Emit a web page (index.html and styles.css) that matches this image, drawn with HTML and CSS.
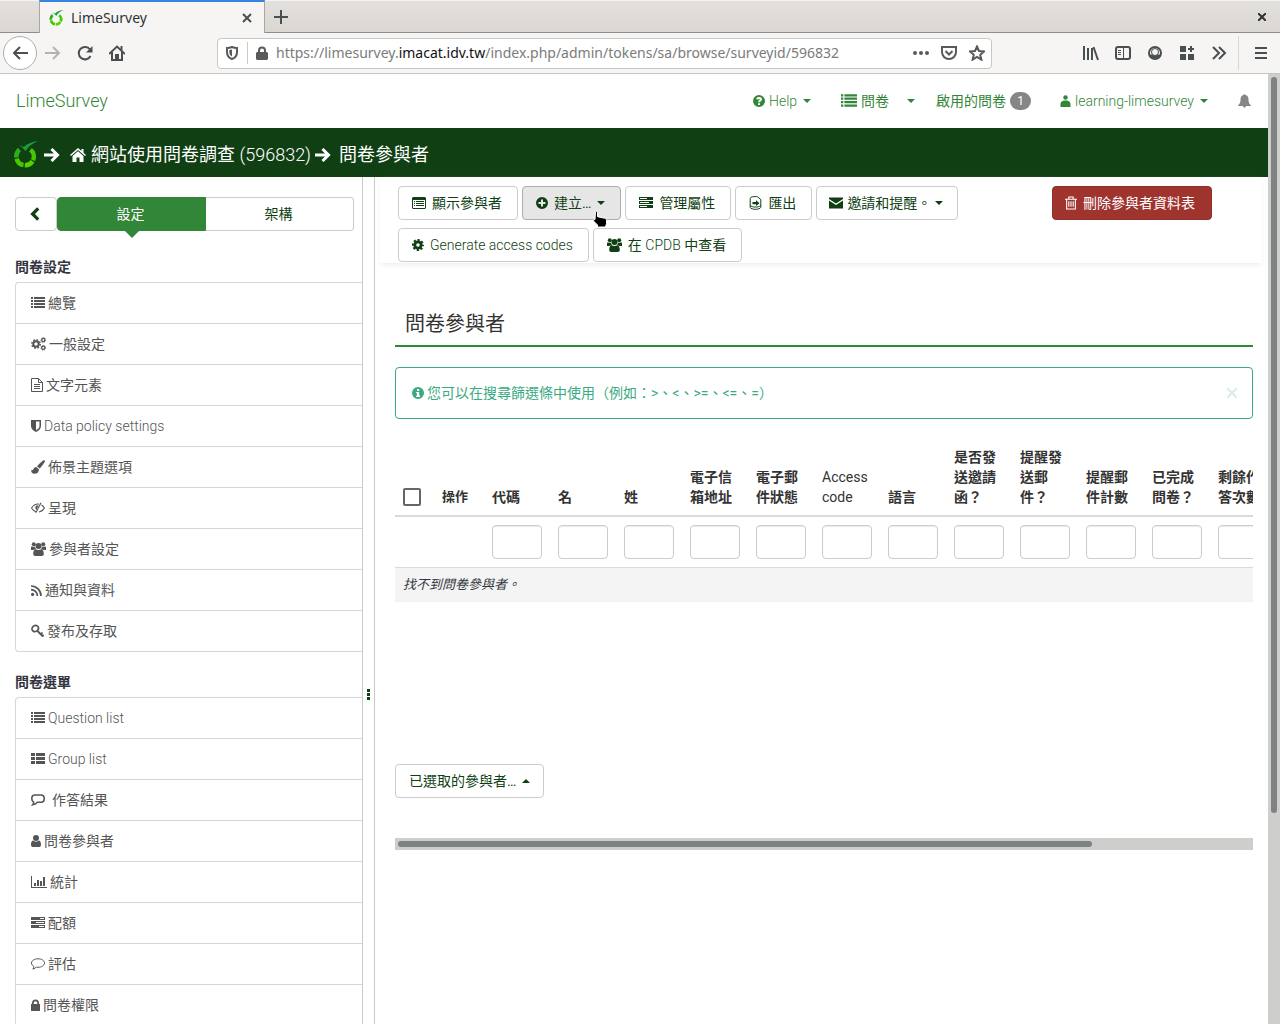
FILE: index.html
```html
<!DOCTYPE html>
<html lang="zh-Hant">
<head>
<meta charset="utf-8">
<meta name="viewport" content="width=device-width, initial-scale=1">
<title>LimeSurvey</title>
<link rel="stylesheet" href="styles.css">
</head>
<body>
<svg class="sprite" aria-hidden="true">
  <symbol id="lime" viewBox="0 0 24 27"><g fill="none" stroke-width="4.500"><path stroke="#2fae1c" d="M5.500 8.600A8.500 8.500 0 0 0 2.500 16.500"/><path stroke="#46c800" d="M2.600 17.600A8.500 8.500 0 0 0 9.500 24"/><path stroke="#55d200" d="M10.800 24.200A8.500 8.500 0 0 0 18.500 20.300"/><path stroke="#46c800" d="M19 19.200A8.500 8.500 0 0 0 16.500 8.800"/></g><path fill="#1d9e3c" d="M3.800 3.800l6 2.200C13.500 2.500 18 .5 24 .2c-6 2.300-9.500 5.300-12.500 9.800C9.500 7.500 7.500 5.500 3.800 3.800z"/></symbol>
  <symbol id="list" viewBox="0 0 14 12"><path d="M0 0h2v2H0zM3 0h11v2H3zM0 3h2v2H0zM3 3h11v2H3zM0 6h2v2H0zM3 6h11v2H3zM0 9h2v2H0zM3 9h11v2H3z"/></symbol>
  <symbol id="thlist" viewBox="0 0 14 12"><path d="M0 0h4v3H0zM5 0h9v3H5zM0 4h4v3H0zM5 4h9v3H5zM0 8h4v3H0zM5 8h9v3H5z"/></symbol>
  <symbol id="gear" viewBox="0 0 12 12"><circle cx="6" cy="6" r="3.200" fill="none" stroke="currentColor" stroke-width="2.800"/><circle cx="6" cy="6" r="5" fill="none" stroke="currentColor" stroke-width="2" stroke-dasharray="2.200 1.727" stroke-dashoffset="1.100"/></symbol>
  <symbol id="gears" viewBox="0 0 15 14"><g fill="none" stroke="currentColor"><circle cx="5" cy="7" r="2.700" stroke-width="2"/><circle cx="5" cy="7" r="4.200" stroke-width="1.500" stroke-dasharray="1.700 1.600"/><circle cx="12.300" cy="3" r="1.600" stroke-width="1.300"/><circle cx="12.300" cy="3" r="2.400" stroke-width=".8" stroke-dasharray="1 .88"/><circle cx="12.300" cy="10.800" r="1.600" stroke-width="1.300"/><circle cx="12.300" cy="10.800" r="2.400" stroke-width=".8" stroke-dasharray="1 .88"/></g></symbol>
  <symbol id="file" viewBox="0 0 12 14"><path fill="none" stroke="currentColor" d="M.5.5h7l4 4v9H.5zM7.500.5v4h4M3 6.500h6M3 8.500h6M3 10.500h6"/></symbol>
  <symbol id="shield" viewBox="0 0 10 12"><path d="M0 0h10v6c0 3-2.500 5-5 6C2.500 11 0 9 0 6zM5 1.500v8.700C7 9.200 8.500 7.800 8.500 6V1.500z" fill-rule="evenodd"/></symbol>
  <symbol id="brush" viewBox="0 0 14 14"><path d="M12.700.2c.9-.3 1.500.5 1.200 1.300-.5 1.300-3.200 5-5.200 7L6 6.300C8 4 11 .9 12.700.2zM5.300 7l2.600 2.200c.1 2.800-1.700 4.600-4.300 4.600C1.200 13.800.2 12 0 9.900c.8.500 1.600.8 2.200-.3C2.900 8.100 3.800 7 5.300 7z"/></symbol>
  <symbol id="eyeslash" viewBox="0 0 14 12"><path fill="none" stroke="currentColor" stroke-width="1.100" d="M5.500 10C3.500 9.500 1.700 8 .6 6 2.300 3.300 4.500 2 7 2h1M10.500 3c1.200.7 2.100 1.700 2.900 3-1.300 2.200-3.200 3.700-5.400 4M10 .8L4.700 11"/><path d="M7.500 3.300L5.500 8C4 7 3.800 4.500 5.500 3.500z"/></symbol>
  <symbol id="users" viewBox="0 0 15 14"><circle cx="2.800" cy="2.300" r="2"/><circle cx="12.200" cy="2.300" r="2"/><circle cx="7.500" cy="4" r="3"/><path d="M0 8V5.500C0 4.500.7 4.200 1.300 4.500c1 .5 2 .4 2.700.2.200 1 .5 1.700 1 2.300-1 .1-1.800.5-2.400 1zM15 8V5.500c0-1-.7-1.300-1.300-1-1 .5-2 .4-2.700.2-.2 1-.5 1.700-1 2.300 1 .1 1.800.5 2.400 1zM2.200 12c0-2.700.7-4.800 2.600-4.800C6 8.200 9 8.200 10.200 7.200c1.900 0 2.600 2.100 2.600 4.800 0 1.300-.8 2-2 2H4.200c-1.200 0-2-.7-2-2z"/></symbol>
  <symbol id="rss" viewBox="0 0 11 11"><circle cx="1.600" cy="9.400" r="1.600"/><path fill="none" stroke="currentColor" stroke-width="1.700" d="M0 4.600A6.400 6.400 0 0 1 6.400 11M0 1a10 10 0 0 1 10 10"/></symbol>
  <symbol id="key" viewBox="0 0 13 13"><path fill="none" stroke="currentColor" stroke-width="1.800" d="M6.500 6.500L12 12M9.800 9.800L11.500 8M11.500 11.700l1.200-1.200"/><ellipse cx="4.200" cy="4" rx="3.300" ry="2.900" fill="none" stroke="currentColor" stroke-width="1.700" transform="rotate(-35 4.200 4)"/></symbol>
  <symbol id="comment-sq" viewBox="0 0 14 12"><path fill="none" stroke="currentColor" stroke-width="1.600" d="M4 1h6c2 0 3.200 1.200 3.200 3.500S12 8.200 10 8.200H6.500C5.500 9.800 4 10.500 1.800 10.700 2.600 9.800 2.700 9 2.500 8 1.300 7.500.8 6.300.8 4.500.8 2.200 2 1 4 1z"/></symbol>
  <symbol id="comment" viewBox="0 0 14 12"><path fill="none" stroke="currentColor" d="M7 .8c3.600 0 6.500 1.800 6.500 4.200S10.600 9.300 7 9.300c-.6 0-1.200 0-1.700-.2-.9 1-2 1.700-3.400 2 .6-.8.900-1.600.9-2.700C1.400 7.600.5 6.400.5 5 .5 2.600 3.400.8 7 .8z"/></symbol>
  <symbol id="user" viewBox="0 0 10 12"><circle cx="5" cy="3" r="3"/><path d="M2 5.500c1.800 1.500 4.200 1.500 6 0 1.500.3 2 2 2 4.200 0 1.500-.8 2.300-2 2.300H2c-1.200 0-2-.8-2-2.300C0 7.500.5 5.800 2 5.500z"/></symbol>
  <symbol id="person" viewBox="0 0 10 13"><circle cx="5" cy="2.500" r="2.200"/><path d="M0 12V9.500C0 6.500 2 5.500 5 5.500s5 1 5 4V12z"/></symbol>
  <symbol id="chart" viewBox="0 0 16 12"><path d="M0 0h1v11h15v1H0zM3 7h2v3H3zM6 4h2v6H6zM9 5h2v5H9zM12 1h2v9h-2z"/></symbol>
  <symbol id="tasks" viewBox="0 0 14 12"><path fill-rule="evenodd" d="M0 0h14v3H0zM9 1v1h4V1zM0 4h14v3H0zM5 5v1h8V5zM0 8h14v3H0zM8 9v1h5V9z"/></symbol>
  <symbol id="lock" viewBox="0 0 9 12"><path fill-rule="evenodd" d="M1 5V4a3.500 3.500 0 0 1 7 0v1h1v7H0V5zM2.700 5h3.600V4a1.800 1.800 0 0 0-3.600 0z"/></symbol>
  <symbol id="table" viewBox="0 0 14 12"><path fill-rule="evenodd" d="M1 0h12l1 1v10l-1 1H1l-1-1V1zM1 3v8h12V3zM2 4h1v1H2zM4 4h8v1H4zM2 6h1v1H2zM4 6h8v1H4zM2 8h1v1H2zM4 8h8v1H4z"/></symbol>
  <symbol id="plus" viewBox="0 0 12 12"><path fill-rule="evenodd" d="M6 0a6 6 0 1 0 0 12A6 6 0 0 0 6 0zM5 2.500h2V5h2.500v2H7v2.500H5V7H2.500V5H5z"/></symbol>
  <symbol id="server" viewBox="0 0 14 12"><path fill-rule="evenodd" d="M0 0h14v3H0zM1 1v1h7V1zM0 4h14v3H0zM1 5v1h9V5zM0 8h14v3H0zM1 9v1h7V9z"/></symbol>
  <symbol id="export" viewBox="0 0 12 14"><path fill="none" stroke="currentColor" d="M8 .8C5 .3.700.5.700 2.700v8.500C.7 14 11.300 14 11.300 11V3.500L8 .8zM.7 9.500c2 2 8 2.200 10.600 0"/><path d="M3 6h3.500V4.200L10 7.200 6.500 10V8.200H3z"/></symbol>
  <symbol id="mail" viewBox="0 0 14 11"><path d="M0 0h14v1.500L7 6 0 1.500zM0 3l7 4.500L14 3v8H0z"/></symbol>
  <symbol id="trash" viewBox="0 0 11 12"><path fill="none" stroke="currentColor" d="M0 2.500h11M3.500 2.500v-2h4v2M1.500 2.500v9h8v-9M3.500 4.500v5M5.500 4.500v5M7.500 4.500v5"/></symbol>
  <symbol id="info" viewBox="0 0 12 12"><path fill-rule="evenodd" d="M6 0a6 6 0 1 0 0 12A6 6 0 0 0 6 0zM5 2h2.200v2H5zM4.200 5h3v3.500H8V10H4.200V8.500H5V6.300h-.8z"/></symbol>
  <symbol id="help" viewBox="0 0 12 12"><path fill-rule="evenodd" d="M6 0a6 6 0 1 0 0 12A6 6 0 0 0 6 0zM5 8.200h2V10H5zM3.200 4C3.400 2.600 4.600 2 6 2c1.600 0 3 .8 3 2.300 0 1.600-1.800 1.700-1.800 3H5c0-2 1.800-1.900 1.800-2.800 0-.8-1.500-.9-1.800.2z"/></symbol>
  <symbol id="bell" viewBox="0 0 13 14"><path d="M6.500 0l1 1.100c2 .5 3 2 3 4.400 0 3 .7 4.500 2.500 6V12H8a1.500 1.500 0 0 1-3 0H0v-.5c1.800-1.500 2.500-3 2.500-6 0-2.400 1-3.900 3-4.400z"/></symbol>
  <symbol id="arrow" viewBox="0 0 16 14"><path fill="none" stroke="currentColor" stroke-width="3" d="M0 7h13M7.500 1l6 6-6 6"/></symbol>
  <symbol id="home" viewBox="0 0 16 14"><path d="M8 0L0 7l1 1 7-6 7 6 1-1-2.500-2.200V1h-2v2zM8 3.200L2.500 8v6h4V9.500h3V14h4V8z"/></symbol>
  <symbol id="chevron" viewBox="0 0 9 13"><path fill="none" stroke="currentColor" stroke-width="3" d="M7.500 1.300L2.300 6.500l5.200 5.200"/></symbol>
</svg>

<header class="browser">
  <div class="tabs">
    <div class="tab">
      <svg class="favicon"><use href="#lime"/></svg>
      <span class="tab-name">LimeSurvey</span>
      <button class="plain" aria-label="Close tab"><svg width="10" height="10" viewBox="0 0 10 10"><path class="line" d="M1 1l8 8M9 1L1 9"/></svg></button>
    </div>
    <button class="plain new-tab" aria-label="New tab"><svg width="14" height="14" viewBox="0 0 14 14"><path class="line" d="M7 0v14M0 7h14"/></svg></button>
    <button class="plain win-close" aria-label="Close window"><svg width="8" height="8" viewBox="0 0 8 8"><path class="line" d="M0 0l8 8M8 0L0 8"/></svg></button>
  </div>
  <div class="bar">
    <button class="plain back" aria-label="Back"><svg width="16" height="14" viewBox="0 0 16 14"><path class="line" d="M16 7H2M8 1L2 7l6 6"/></svg></button>
    <button class="plain off" aria-label="Forward"><svg width="16" height="14" viewBox="0 0 16 14"><path class="line" d="M0 7h14M8 1l6 6-6 6"/></svg></button>
    <button class="plain" aria-label="Reload"><svg width="16" height="16" viewBox="0 0 16 16"><path class="line" d="M13.500 11A6.200 6.200 0 1 1 13 4.500"/><path d="M15.500 1v6.500H9z"/></svg></button>
    <button class="plain" aria-label="Home"><svg width="16" height="16" viewBox="0 0 16 16"><path class="line" d="M0 9l8-7.500L16 9M3 7v8h10V7"/><path d="M6 9h4v6H6zM11.500 1h2v4h-2z"/></svg></button>
    <div class="url">
      <svg width="12" height="14" viewBox="0 0 12 14"><path class="line" d="M1 2c2 0 3.500-.3 5-1 1.500.7 3 1 5 1v4c0 3.500-2 6-5 7-3-1-5-3.500-5-7z"/><path d="M6 3.500v7C4.300 9.500 3.300 8 3.300 6V4z"/></svg>
      <i class="url-rule"></i>
      <svg width="12" height="14" viewBox="0 0 12 14"><path fill-rule="evenodd" d="M2 6V4.500a4 4 0 0 1 8 0V6h1l1 1v6l-1 1H1l-1-1V7l1-1zM4 6h4V4.500a2 2 0 0 0-4 0z"/></svg>
      <span class="address">https://limesurvey.<b>imacat.idv.tw</b>/index.php/admin/tokens/sa/browse/surveyid/596832</span>
      <svg width="16" height="16" viewBox="0 0 16 16"><circle cx="2" cy="8" r="2"/><circle cx="8" cy="8" r="2"/><circle cx="14" cy="8" r="2"/></svg>
      <svg width="16" height="16" viewBox="0 0 16 16"><path class="line" d="M1 2h14v5a7 7 0 0 1-14 0zM4.500 6L8 9.500 11.500 6"/></svg>
      <svg width="16" height="16" viewBox="0 0 16 16"><path class="line" d="M8 1.500l2 4.500 5 .5-3.800 3.300 1.200 4.900L8 12l-4.400 2.700 1.200-4.900L1 6.500 6 6z"/></svg>
    </div>
    <button class="plain" aria-label="Library"><svg width="16" height="16" viewBox="0 0 16 16"><path class="line" d="M1 1v14M5 3v12M9 3v12M10.500 2L15 15"/></svg></button>
    <button class="plain" aria-label="Sidebars"><svg width="16" height="16" viewBox="0 0 16 16"><rect class="line" x="1" y="2" width="14" height="12" rx="2"/><path class="line thin" d="M8.500 2v12M3 5.500h3M3 7.500h3M3 9.500h3"/></svg></button>
    <button class="plain" aria-label="Account"><svg width="16" height="16" viewBox="0 0 16 16"><circle class="line" cx="8" cy="8" r="6"/><path d="M2.500 9.500h3C6.500 11 9.500 11 10.500 9.500h3L12 13H4z"/><circle class="line thin" cx="8" cy="7" r="3.500"/></svg></button>
    <button class="plain" aria-label="Extension"><svg width="16" height="16" viewBox="0 0 16 16"><path d="M1 1h6v6H1zM1 9h6v6H1zM9 9h6v6H9zM11 1h2v2h2v2h-2v2h-2V5H9V3h2z"/></svg></button>
    <button class="plain" aria-label="More tools"><svg width="16" height="16" viewBox="0 0 16 16"><path class="line" d="M2 2l6 6-6 6M8 2l6 6-6 6"/></svg></button>
    <i class="bar-rule"></i>
    <button class="plain" aria-label="Menu"><svg width="12" height="14" viewBox="0 0 12 14"><path class="line" d="M0 2h12M0 7h12M0 12h12"/></svg></button>
  </div>
</header>

<div class="viewport">
  <div class="page">
    <nav class="navbar">
      <a class="brand latin" href="#">LimeSurvey</a>
      <a class="nav-help latin" href="#"><svg class="i12"><use href="#help"/></svg> Help <i class="caret"></i></a>
      <a class="nav-surveys" href="#"><svg class="i16"><use href="#list"/></svg> 問卷</a>
      <a class="nav-more" href="#" aria-label="問卷選單"><i class="caret"></i></a>
      <a class="nav-active" href="#">啟用的問卷 <span class="badge">1</span></a>
      <a class="nav-user latin" href="#"><svg class="i11"><use href="#person"/></svg> learning-limesurvey <i class="caret"></i></a>
      <a class="nav-bell" href="#" aria-label="通知"><svg class="i13"><use href="#bell"/></svg></a>
    </nav>
    <div class="crumbs">
      <svg class="logo"><use href="#lime"/></svg>
      <svg class="i16"><use href="#arrow"/></svg>
      <a href="#"><svg class="i16"><use href="#home"/></svg><span>網站使用問卷調查 <span class="latin">(596832)</span></span></a>
      <svg class="i16"><use href="#arrow"/></svg>
      <span>問卷參與者</span>
    </div>
    <div class="columns">
      <aside class="sidebar">
        <div class="switch">
          <button class="btn collapse" aria-label="收合"><svg class="i12"><use href="#chevron"/></svg></button>
          <button class="btn on">設定</button>
          <button class="btn struct">架構</button>
        </div>
        <h2>問卷設定</h2>
        <ul class="menu">
          <li><a href="#"><svg class="i14"><use href="#list"/></svg>總覽</a></li>
          <li><a href="#"><svg class="i15"><use href="#gears"/></svg>一般設定</a></li>
          <li><a href="#"><svg class="i12"><use href="#file"/></svg>文字元素</a></li>
          <li><a href="#" class="latin"><svg class="i10"><use href="#shield"/></svg>Data policy settings</a></li>
          <li><a href="#"><svg class="i14"><use href="#brush"/></svg>佈景主題選項</a></li>
          <li><a href="#"><svg class="i14"><use href="#eyeslash"/></svg>呈現</a></li>
          <li><a href="#"><svg class="i15"><use href="#users"/></svg>參與者設定</a></li>
          <li><a href="#"><svg class="i11"><use href="#rss"/></svg>通知與資料</a></li>
          <li><a href="#"><svg class="i13"><use href="#key"/></svg>發布及存取</a></li>
        </ul>
        <h2>問卷選單</h2>
        <ul class="menu">
          <li><a href="#" class="latin"><svg class="i14"><use href="#list"/></svg>Question list</a></li>
          <li><a href="#" class="latin"><svg class="i14"><use href="#thlist"/></svg>Group list</a></li>
          <li><a href="#" class="wide"><svg class="i14"><use href="#comment-sq"/></svg>作答結果</a></li>
          <li><a href="#"><svg class="i10"><use href="#user"/></svg>問卷參與者</a></li>
          <li><a href="#"><svg class="i16"><use href="#chart"/></svg>統計</a></li>
          <li><a href="#"><svg class="i14"><use href="#tasks"/></svg>配額</a></li>
          <li><a href="#"><svg class="i14"><use href="#comment"/></svg>評估</a></li>
          <li><a href="#"><svg class="i9"><use href="#lock"/></svg>問卷權限</a></li>
        </ul>
      </aside>
      <div class="splitter"><i></i><i></i><i></i></div>
      <main>
        <div class="toolbar">
          <div class="tools">
            <button class="btn"><svg class="i14"><use href="#table"/></svg>顯示參與者</button>
            <button class="btn hover"><svg class="i12"><use href="#plus"/></svg>建立… <i class="caret"></i>
              <svg class="pointer" viewBox="0 0 14 18"><path fill="#000" stroke="#fff" d="M2.500 1.500c1.300-.8 2 .2 2 1.200v4l7 1.500c1.500.4 2 1 2 2.300v3l-1 3.500h-8v-2L1 11.500c-.8-1.200-.2-2.300 1-2z"/></svg>
            </button>
            <button class="btn"><svg class="i14"><use href="#server"/></svg>管理屬性</button>
            <button class="btn"><svg class="i13"><use href="#export"/></svg>匯出</button>
            <button class="btn invite"><svg class="i14"><use href="#mail"/></svg>邀請和提醒。<i class="caret"></i></button>
            <button class="btn latin"><svg class="i12"><use href="#gear"/></svg>Generate access codes</button>
            <button class="btn"><svg class="i15"><use href="#users"/></svg><span>在 <span class="latin">CPDB</span> 中查看</span></button>
          </div>
          <div class="danger-zone"><button class="btn danger"><svg class="i12"><use href="#trash"/></svg>刪除參與者資料表</button></div>
        </div>
        <section class="content">
          <h1>問卷參與者</h1>
          <div class="alert"><svg class="i12"><use href="#info"/></svg><span>您可以在搜尋篩選條中使用（例如：&gt;、&lt;、&gt;=、&lt;=、=）</span><button class="plain dismiss" aria-label="關閉"><svg width="10" height="10" viewBox="0 0 10 10"><path class="line" d="M0 0l10 10M10 0L0 10"/></svg></button></div>
          <div class="scroller">
            <table>
              <colgroup><col class="c-check"><col class="c-act"><col span="12" class="c-field"></colgroup>
              <thead>
                <tr><th><input type="checkbox" aria-label="全選"></th><th class="small">操作</th><th>代碼</th><th>名</th><th>姓</th><th>電子信箱地址</th><th>電子郵件狀態</th><th class="thin-head">Access code</th><th>語言</th><th>是否發送邀請函？</th><th>提醒發送郵件？</th><th>提醒郵件計數</th><th>已完成問卷？</th><th>剩餘作答次數</th></tr>
                <tr class="filters"><td></td><td></td><td><input type="text" aria-label="代碼"></td><td><input type="text" aria-label="名"></td><td><input type="text" aria-label="姓"></td><td><input type="text" aria-label="電子信箱地址"></td><td><input type="text" aria-label="電子郵件狀態"></td><td><input type="text" aria-label="Access code"></td><td><input type="text" aria-label="語言"></td><td><input type="text" aria-label="是否發送邀請函"></td><td><input type="text" aria-label="提醒發送郵件"></td><td><input type="text" aria-label="提醒郵件計數"></td><td><input type="text" aria-label="已完成問卷"></td><td><input type="text" aria-label="剩餘作答次數"></td></tr>
              </thead>
              <tbody><tr><td colspan="14" class="empty"><em>找不到問卷參與者。</em></td></tr></tbody>
            </table>
            <button class="btn selected">已選取的參與者… <i class="caret up"></i></button>
          </div>
          <div class="hbar"><i></i></div>
        </section>
      </main>
    </div>
  </div>
  <div class="vbar"><i></i></div>
</div>
</body>
</html>
```
FILE: styles.css
```css
* { box-sizing: border-box; }
body {
  margin: 0;
  height: 100vh;
  overflow: hidden;
  display: flex;
  flex-direction: column;
  background: #fff;
  color: #333641;
  font: 400 14px/20px Roboto, "Noto Sans CJK TC", sans-serif;
}
a { color: inherit; text-decoration: none; }
button, input { font: inherit; color: inherit; margin: 0; }
svg { fill: currentColor; flex: none; display: block; }
.latin { font-weight: 300; }
.sprite { position: absolute; width: 0; height: 0; }
.line { fill: none; stroke: currentColor; stroke-width: 2; }
.thin { stroke-width: 1; }
.i9 { width: 9px; height: 12px; }
.i10 { width: 10px; height: 12px; }
.i11 { width: 11px; height: 13px; }
.i12 { width: 12px; height: 14px; }
.i13 { width: 13px; height: 14px; }
.i14 { width: 14px; height: 14px; }
.i15 { width: 15px; height: 14px; }
.i16 { width: 16px; height: 14px; }

/* Browser frame */
.browser { flex: none; font-family: "Noto Sans", sans-serif; color: #4a4f51; }
.tabs {
  display: flex;
  height: 33px;
  padding-left: 39px;
  background: linear-gradient(#e3e0dd, #dad6d2);
  border-top: 1px solid #f4f3f2;
  box-shadow: inset 0 -1px #8f8d8b;
}
.tab {
  display: flex;
  align-items: center;
  gap: 7px;
  width: 226px;
  padding: 0 12px 0 9px;
  background: #f6f5f4;
  border: 1px solid #a9a6a3;
  border-top: 2px solid #3584e4;
  border-bottom: 0;
  margin-top: -1px;
}
.favicon { width: 15px; height: 16px; }
.tab-name { flex: 1; color: #2e3436; }
.plain {
  display: flex;
  align-items: center;
  justify-content: center;
  padding: 0;
  border: 0;
  background: none;
}
.new-tab { width: 32px; }
.win-close { margin-left: auto; width: 36px; color: #2e3436; }
.bar {
  display: flex;
  align-items: center;
  gap: 16px;
  height: 41px;
  padding: 0 13px 0 3px;
  background: #f6f5f4;
  border-bottom: 1px solid #c8c5c2;
}
.back { width: 34px; height: 34px; margin-right: -8px; border: 1px solid #b0aeac; border-radius: 50%; background: #fff; }
.off { color: #b3b3b2; }
.url {
  flex: 1;
  min-width: 0;
  display: flex;
  align-items: center;
  gap: 12px;
  height: 31px;
  margin: 0 75px 0 76px;
  padding: 0 6px 0 8px;
  background: #fff;
  border: 1px solid #cbc6c1;
  border-radius: 4px;
  color: #5a5a5a;
}
.url-rule { width: 1px; height: 22px; margin: 0 -4px 0 -3px; background: #cfc9c3; }
.address { flex: 1; min-width: 0; margin-left: -4px; overflow: hidden; white-space: nowrap; color: #7b7b7b; }
.address b { color: #111; font-weight: 400; }
.bar-rule { width: 1px; height: 34px; margin-left: -5px; background: #d8d5d2; }

/* Page area */
.viewport { flex: 1; min-height: 0; display: flex; }
.page { flex: 1; min-width: 0; display: flex; flex-direction: column; }
.vbar { width: 12px; padding: 3px; background: #cececd; }
.vbar i { display: block; height: 78%; border-radius: 3px; background: #7e8382; }

.navbar { display: flex; align-items: center; height: 54px; padding: 0 17px 0 16px; color: #328637; }
.navbar a { display: flex; align-items: center; gap: 4px; }
.navbar .brand { margin-right: auto; font-size: 18px; }
.caret { width: 0; height: 0; border: 4px solid transparent; border-top-color: currentColor; border-bottom: 0; }
.caret.up { border-top: 0; border-bottom: 4px solid currentColor; }
.nav-help .caret, .nav-user .caret { margin-left: 2px; }
.nav-surveys { margin-left: 30px; }
.nav-more { margin-left: 18px; }
.nav-active { margin-left: 21px; }
.nav-user { margin-left: 29px; }
.nav-bell { margin-left: 30px; color: #868686; }
.badge { min-width: 21px; height: 18px; border-radius: 9px; background: #868686; color: #fff; font-size: 12px; line-height: 18px; text-align: center; }

.crumbs {
  display: flex;
  align-items: center;
  gap: 8px;
  height: 49px;
  flex: none;
  padding: 4px 14px 0;
  background: #103f14;
  color: #fff;
  font-size: 18px;
  line-height: 28px;
}
.crumbs a { display: flex; align-items: center; gap: 5px; margin-left: 2px; margin-right: -4px; }
.logo { width: 24px; height: 27px; margin-right: -2px; }

.columns { flex: 1; min-height: 0; display: flex; }
.sidebar { width: 363px; flex: none; overflow: hidden; padding: 20px 0 0 15px; border-right: 1px solid #c9c9c9; }
.btn {
  display: flex;
  align-items: center;
  justify-content: center;
  gap: 6px;
  height: 34px;
  padding: 0 15px 0 13px;
  border: 1px solid #ccc;
  border-radius: 4px;
  background: #fff;
  color: #103f14;
  white-space: nowrap;
}
.switch { display: flex; margin-right: 8px; }
.collapse { width: 42px; }
.on { position: relative; flex: 1; border-color: #328637; background: #328637; color: #fff; border-radius: 4px 0 0 4px; }
.on::after { content: ""; position: absolute; top: 100%; left: 50%; margin-left: -8px; border: 8px solid transparent; border-top-color: #328637; border-bottom: 0; }
.struct { flex: 1; border-left: 0; border-radius: 0 4px 4px 0; }
.sidebar h2 { margin: 26px 0 5px; font-size: 14px; line-height: 20px; font-weight: 700; }
.menu { margin: 0 0 -6px; padding: 0; list-style: none; border: 1px solid #d7d7d7; border-right: 0; border-radius: 4px 0 0 4px; }
.menu + h2 { margin-top: 26px; }
.menu li + li { border-top: 1px solid #d7d7d7; }
.menu a { display: flex; align-items: center; gap: 3px; height: 40px; padding-left: 15px; color: #555; }
.menu a.wide { gap: 7px; }

.splitter { width: 12px; flex: none; display: flex; flex-direction: column; align-items: center; gap: 1px; padding-top: 512px; border-right: 1px solid #c9c9c9; }
.splitter i { width: 3px; height: 3px; background: #103f14; }

main { flex: 1; min-width: 0; }
.toolbar { display: flex; margin: 0 6px 0 5px; padding: 9px 0 1px 18px; box-shadow: 0 3px 5px -1px #ededed; }
.tools { flex: 1; display: flex; flex-wrap: wrap; gap: 8px 4px; padding-right: 80px; }
.danger-zone { flex: none; width: 210px; }
.danger { border-color: #902e29; background: #9f342f; color: #fff; padding: 0 16px 0 12px; }
.hover { position: relative; border-color: #adadad; background: #e6e6e6; }
.pointer { position: absolute; left: 70px; top: 23px; width: 14px; height: 18px; }
.invite { gap: 4px; padding: 0 14px 0 12px; }

.content { margin: 0 15px 0 20px; padding-top: 44px; }
h1 { margin: 0 0 20px; padding: 0 10px 4px; border-bottom: 2px solid #328637; font-size: 20px; line-height: 34px; font-weight: 400; color: #333; }
.alert { display: flex; align-items: center; gap: 3px; min-height: 52px; padding: 0 15px 0 16px; border: 1px solid #3aaa80; border-radius: 4px; color: #3aaa80; }
.dismiss { margin-left: auto; opacity: .2; }
.scroller { overflow: hidden; padding-top: 20px; }
table { table-layout: fixed; border-collapse: collapse; width: 881px; }
.c-check { width: 39px; }
.c-act { width: 50px; }
.c-field { width: 66px; }
th, td { padding: 8px; text-align: left; }
th { height: 77px; vertical-align: bottom; font-weight: 700; color: #333; border-bottom: 2px solid #d9dada; }
thead tr:first-child th { padding-top: 7px; }
th.small { font-size: 13px; }
th.thin-head { font-weight: 400; }
input[type="checkbox"] { appearance: none; display: block; width: 18px; height: 18px; margin-bottom: 1px; border: 2px solid #666; border-radius: 2px; }
input[type="text"] { display: block; width: 50px; height: 34px; padding: 6px; border: 1px solid #ccc; border-radius: 4px; background: #fff; box-shadow: inset 0 1px 1px #ececec; }
.empty { height: 34px; padding: 7px 8px 6px; background: #f4f4f4; border-top: 1px solid #d9dada; font-size: 13px; }
.selected { margin: 162px 0 40px; padding: 0 13px; }
.hbar { height: 12px; padding: 3px; background: #cececd; }
.hbar i { display: block; width: 694px; max-width: 100%; height: 6px; border-radius: 3px; background: #7e8382; }
```
